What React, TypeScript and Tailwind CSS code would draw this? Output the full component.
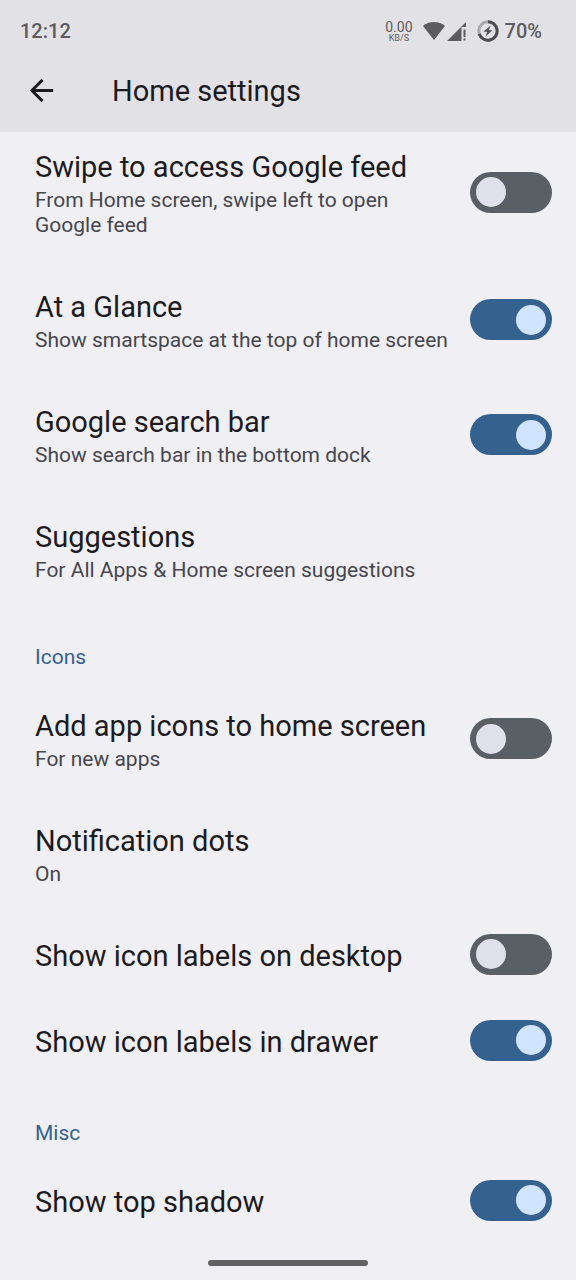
import { useState } from "react";

type Setting = {
  id: string;
  title: string;
  summary?: string;
  checked?: boolean;
};

const homeSettings: Setting[] = [
  {
    id: "feed",
    title: "Swipe to access Google feed",
    summary: "From Home screen, swipe left to open Google feed",
    checked: false,
  },
  {
    id: "glance",
    title: "At a Glance",
    summary: "Show smartspace at the top of home screen",
    checked: true,
  },
  {
    id: "search",
    title: "Google search bar",
    summary: "Show search bar in the bottom dock",
    checked: true,
  },
  {
    id: "suggestions",
    title: "Suggestions",
    summary: "For All Apps & Home screen suggestions",
  },
];

const iconSettings: Setting[] = [
  {
    id: "add-icons",
    title: "Add app icons to home screen",
    summary: "For new apps",
    checked: false,
  },
  { id: "dots", title: "Notification dots", summary: "On" },
  { id: "labels-desktop", title: "Show icon labels on desktop", checked: false },
  { id: "labels-drawer", title: "Show icon labels in drawer", checked: true },
];

const miscSettings: Setting[] = [
  { id: "top-shadow", title: "Show top shadow", checked: true },
];

function StatusBar() {
  return (
    <div className="flex h-[62px] items-center justify-between pl-5 pr-[34px] text-[20px] font-medium text-[#5c5c60]">
      <span>12:12</span>

      <div className="flex items-center">
        <div className="mr-2.5 flex flex-col items-center font-normal">
          <span className="text-[14px] leading-[14px]">0.00</span>
          <span className="text-[9px] leading-[8px]">KB/S</span>
        </div>

        <svg className="mr-0.5 h-[18px] w-[22px]" viewBox="0 0 22 18" fill="currentColor" aria-hidden="true">
          <path d="M11 18 L0 4 Q4.5 0 11 0 Q17.5 0 22 4 Z" />
        </svg>
        <svg className="mr-2.5 h-[19px] w-5" viewBox="0 0 20 19" fill="currentColor" aria-hidden="true">
          <path d="M0 19 L19 0 V5 H14.500 V19 Z" />
          <path d="M16.500 7.500 H18.500 V15 H16.500 Z M16.500 16.500 H18.500 V18.500 H16.500 Z" />
        </svg>
        <svg className="mr-1.5 h-[22px] w-[22px]" viewBox="0 0 22 22" fill="none" aria-hidden="true">
          <circle cx="11" cy="11" r="9.200" stroke="#a9a9ad" strokeWidth="3" />
          <path
            d="M11 1.800 A9.200 9.200 0 1 1 2.250 13.840"
            stroke="#4c4c50"
            strokeWidth="3"
          />
          <path d="M13.500 5.500 L6.500 11.800 H10.300 L8.500 16.500 L15.500 10.200 H11.700 Z" fill="#4c4c50" />
        </svg>
        <span>70%</span>
      </div>
    </div>
  );
}

function SettingRow({ setting }: { setting: Setting }) {
  const [on, setOn] = useState(setting.checked ?? false);

  const text = (
    <>
      <span className="block text-[29px] leading-[34px] text-[#1b1b1f]">
        {setting.title}
      </span>
      {setting.summary && (
        <span className="mt-1 block text-[21px] leading-[25px] text-[#46464c]">
          {setting.summary}
        </span>
      )}
    </>
  );

  if (setting.checked === undefined) {
    return (
      <button type="button" className="block w-full py-[26px] pl-[35px] pr-6 text-left">
        {text}
      </button>
    );
  }

  return (
    <label
      htmlFor={setting.id}
      className="flex cursor-pointer items-center justify-between gap-4 py-[26px] pl-[35px] pr-6"
    >
      <span className="min-w-0 flex-1">{text}</span>
      <input
        id={setting.id}
        type="checkbox"
        role="switch"
        checked={on}
        onChange={(e) => setOn(e.target.checked)}
        className="-mb-0.5 -mt-1.5 flex h-[41px] w-[82px] shrink-0 cursor-pointer appearance-none items-center rounded-full bg-[#5a5f66] px-1.5 before:size-[30px] before:rounded-full before:bg-[#e0e0ec] checked:justify-end checked:bg-[#35618f] checked:before:bg-[#d1e4ff]"
      />
    </label>
  );
}

function SectionTitle({ children }: { children: string }) {
  return (
    <h2 className="pb-[13px] pl-[35px] pt-[35px] text-[21px] leading-[26px] text-[#35618f]">
      {children}
    </h2>
  );
}

function App() {
  return (
    <div className="flex min-h-screen flex-col bg-[#f0eff4] font-[Roboto,sans-serif]">

      <header className="bg-[#e2e1e6]">
        <StatusBar />

        <div className="flex h-[70px] items-start pl-6">
          <button type="button" aria-label="Back" className="mt-[11px] text-[#1b1b1f]">
            <svg className="size-[35px]" viewBox="0 0 24 24" fill="currentColor" aria-hidden="true">
              <path d="M20 11H7.830l5.590-5.590L12 4l-8 8 8 8 1.410-1.410L7.830 13H20v-2z" />
            </svg>
          </button>
          <h1 className="ml-[53px] mt-3 text-[29px] leading-[34px] text-[#1b1b1f]">
            Home settings
          </h1>
        </div>
      </header>

      <main className="-mt-2 flex-1">
        {homeSettings.map((s) => (
          <SettingRow key={s.id} setting={s} />
        ))}

        <SectionTitle>Icons</SectionTitle>
        {iconSettings.map((s) => (
          <SettingRow key={s.id} setting={s} />
        ))}

        <SectionTitle>Misc</SectionTitle>
        {miscSettings.map((s) => (
          <SettingRow key={s.id} setting={s} />
        ))}
      </main>

      <footer className="flex h-[35px] items-center justify-center">
        <div className="h-1.5 w-40 rounded-full bg-[#626264]" />
      </footer>

    </div>
  );
}

export default App;
